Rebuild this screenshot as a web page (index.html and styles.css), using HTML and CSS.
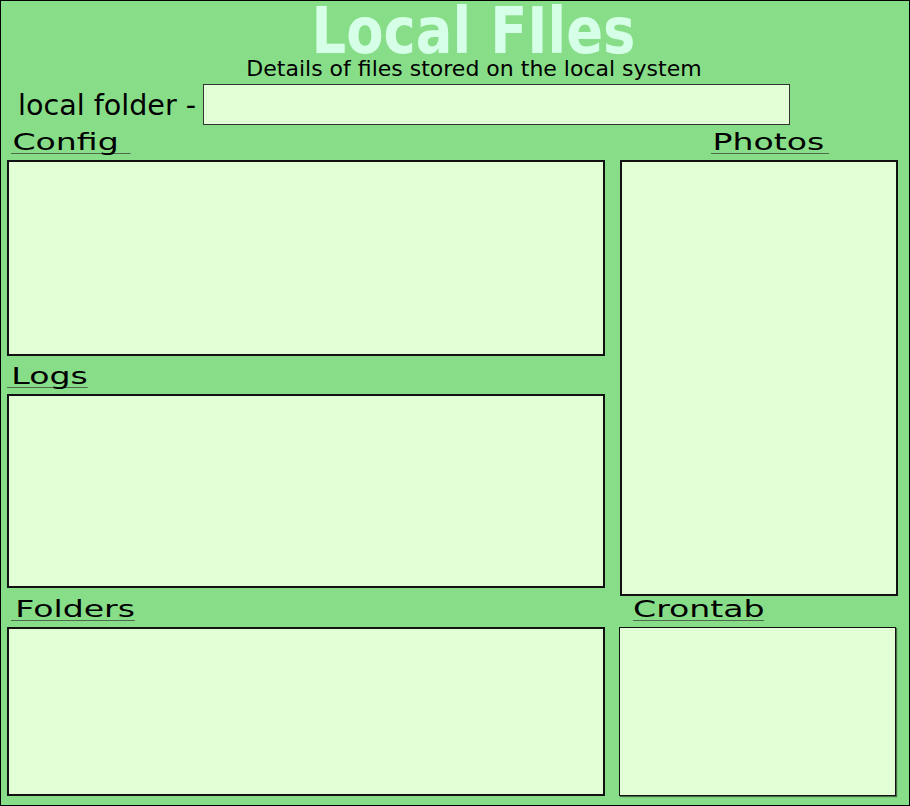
FILE: index.html
```html
<!DOCTYPE html>
<html lang="en">
<head>
  <meta charset="UTF-8">
  <title>Local Files</title>
  <link rel="stylesheet" href="styles.css">
</head>
<body>
  <div id="page">
    <!-- Header -->
    <div id="header">
      <h1 class="title">Local FIles</h1>
      <p class="subtitle">Details of files stored on the local system</p>
    </div>

    <!-- Local folder path -->
    <div id="folder-row">
      <span class="folder-label">local folder -</span>
      <div class="folder-input"></div>
    </div>

    <!-- File panels -->
    <div id="panels">
      <div class="column column-left">
        <div class="section-title title-config"><span class="heading">Config</span></div>
        <div class="panel panel-config"></div>

        <div class="section-title title-logs"><span class="heading">Logs</span></div>
        <div class="panel panel-logs"></div>

        <div class="section-title title-folders"><span class="heading">Folders</span></div>
        <div class="panel panel-folders"></div>
      </div>

      <div class="column column-right">
        <div class="section-title title-photos"><span class="heading">Photos</span></div>
        <div class="panel panel-photos"></div>

        <div class="section-title title-crontab"><span class="heading">Crontab</span></div>
        <div class="panel panel-crontab"></div>
      </div>
    </div>
  </div>
</body>
</html>
```

FILE: styles.css
```css
/* Whole page is one green sheet */
body {
  margin: 0;
  padding: 0;
  font-family: "DejaVu Sans", "Liberation Sans", sans-serif;
  color: #000;
}

#page {
  width: 910px;
  height: 806px;
  box-sizing: border-box;
  border: 1px solid #000;
  background: #88de88;
  overflow: hidden;
}

/* Header */
#header {
  padding-left: 38px;
  text-align: center;
}

.title {
  display: inline-block;
  margin: 2px 0 0;
  font-size: 64px;
  line-height: 56px;
  font-weight: bold;
  color: #d5ffe6;
  transform: scaleX(0.85);
}

.subtitle {
  margin: 0;
  font-size: 22px;
  line-height: 20px;
}

/* Folder path row */
#folder-row {
  display: flex;
  align-items: center;
  margin-top: 5px;
  padding-left: 17px;
}

.folder-label {
  font-size: 28.6px;
  line-height: 28px;
}

.folder-input {
  width: 585px;
  height: 39px;
  margin-left: 7px;
  background: #e3ffd5;
  border: 1px solid #333;
}

/* Panels */
#panels {
  display: flex;
  padding: 0 6px;
  gap: 15px;
}

.column {
  display: flex;
  flex-direction: column;
}

.column-left {
  width: 598px;
}

.column-right {
  width: 278px;
}

.section-title {
  display: flex;
  align-items: flex-end;
  padding-bottom: 6px;
  box-sizing: border-box;
}

.heading {
  display: inline-block;
  font-size: 23px;
  line-height: 21px;
  border-bottom: 1px solid #4f6a4f;
  transform: scaleX(1.44);
  transform-origin: left bottom;
}

.title-config { height: 35px; padding-left: 4px; }
.title-config .heading { padding: 0 8px 0 1px; }

.title-logs { height: 38px; }
.title-logs .heading { padding-left: 3px; }

.title-folders { height: 39px; padding-left: 4px; }
.title-folders .heading { padding-left: 3px; }

.title-photos { height: 35px; padding-left: 91px; }
.title-photos .heading { padding: 0 3px 0 1px; }

.title-crontab { height: 31px; padding-left: 13px; }

.panel {
  box-sizing: border-box;
  background: #e3ffd5;
  border: 2px solid #111;
}

.panel-config { height: 196px; }
.panel-logs { height: 194px; }
.panel-folders { height: 169px; }
.panel-photos { height: 436px; }

.panel-crontab {
  width: 277px;
  height: 169px;
  margin-left: -1px;
  border-width: 1px;
  box-shadow: 1px 1px 1px rgba(0, 0, 0, 0.5);
}
```
